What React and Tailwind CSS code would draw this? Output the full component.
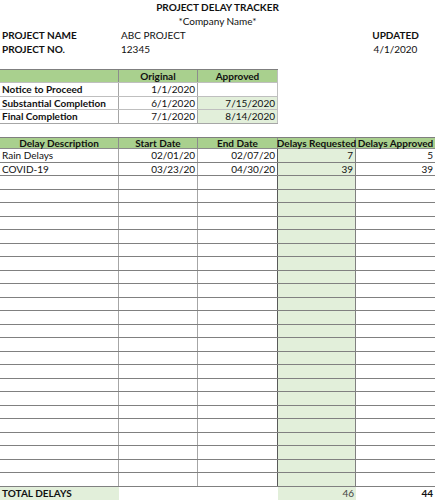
const font = { fontFamily: "Lato, 'Open Sans', sans-serif" };

const delays = [
  { desc: "Rain Delays", start: "02/01/20", end: "02/07/20", req: 7, appr: 5 },
  { desc: "COVID-19", start: "03/23/20", end: "04/30/20", req: 39, appr: 39 },
];

const milestones = [
  { name: "Notice to Proceed", original: "1/1/2020", approved: "" },
  { name: "Substantial Completion", original: "6/1/2020", approved: "7/15/2020" },
  { name: "Final Completion", original: "7/1/2020", approved: "8/14/2020" },
];

export default function App() {
  const rows = [...delays];
  while (rows.length < 25) rows.push(null);

  return (
    <div className="w-[435px] h-[500px] bg-white text-[10px] leading-none text-[#111] overflow-hidden whitespace-nowrap" style={font}>
      {/* Heading */}
      <div className="h-[14px] flex items-center justify-center font-bold">PROJECT DELAY TRACKER</div>
      <div className="h-[14px] flex items-center justify-center">*Company Name*</div>
      <div className="h-[14px] flex items-center">
        <div className="w-[119px] pl-[2px] font-bold">PROJECT NAME</div>
        <div className="flex-1 pl-[2px]">ABC PROJECT</div>
        <div className="w-[79px] text-center font-bold">UPDATED</div>
      </div>
      <div className="h-[14px] flex items-center">
        <div className="w-[119px] pl-[2px] font-bold">PROJECT NO.</div>
        <div className="flex-1 pl-[2px]">12345</div>
        <div className="w-[79px] text-center">4/1/2020</div>
      </div>
      <div className="h-[13px]" />

      {/* Milestones */}
      <div className="w-[278px]">
        <div className="flex h-[13px] bg-[#a9d08e] border-t border-[#7f7f7f] font-bold">
          <div className="w-[119px] border-r border-[#8c8c8c]" />
          <div className="w-[79px] border-r border-[#8c8c8c] flex items-center justify-center">Original</div>
          <div className="w-[80px] border-r border-[#bfbfbf] flex items-center justify-center">Approved</div>
        </div>
        {milestones.map((m) => (
          <div key={m.name} className="flex h-[13.5px] border-t border-[#bfbfbf]">
            <div className="w-[119px] border-r border-[#a6a6a6] pl-[2px] flex items-center font-bold">{m.name}</div>
            <div className="w-[79px] border-r border-[#a6a6a6] pr-[2px] flex items-center justify-end">{m.original}</div>
            <div className={`w-[80px] border-r border-[#bfbfbf] pr-[2px] flex items-center justify-end ${m.approved ? "bg-[#e2efda]" : ""}`}>
              {m.approved}
            </div>
          </div>
        ))}
        <div className="border-t border-[#a6a6a6]" />
      </div>

      <div className="h-[13.5px]" />

      {/* Delay log */}
      <div className="w-[435px]">
        <div className="flex h-[12px] bg-[#a9d08e] border-t border-[#7f7f7f] border-b border-b-[#8c8c8c] font-bold">
          <div className="w-[119px] border-r border-[#8c8c8c] flex items-center justify-center">Delay Description</div>
          <div className="w-[79px] border-r border-[#8c8c8c] flex items-center justify-center">Start Date</div>
          <div className="w-[80px] border-r border-[#8c8c8c] flex items-center justify-center">End Date</div>
          <div className="w-[78px] border-r border-[#8c8c8c] flex items-center justify-center">Delays Requested</div>
          <div className="flex-1 flex items-center justify-center">Delays Approved</div>
        </div>
        {rows.map((r, i) => (
          <div key={i} className="flex h-[13.5px] border-b border-[#808080]">
            <div className="w-[119px] border-r border-[#a6a6a6] pl-[2px] flex items-center">{r?.desc}</div>
            <div className="w-[79px] border-r border-[#a6a6a6] pr-[2px] flex items-center justify-end">{r?.start}</div>
            <div className="w-[80px] border-r border-[#595959] pr-[2px] flex items-center justify-end">{r?.end}</div>
            <div className="w-[78px] border-r border-[#808080] bg-[#e2efda] pr-[2px] flex items-center justify-end">{r?.req}</div>
            <div className="flex-1 pr-[2px] flex items-center justify-end">{r?.appr}</div>
          </div>
        ))}
        <div className="flex h-[13px] font-bold">
          <div className="w-[119px] bg-[#e2efda] pl-[2px] flex items-center">TOTAL DELAYS</div>
          <div className="w-[79px]" />
          <div className="w-[80px]" />
          <div className="w-[78px] bg-[#e2efda] pr-[2px] flex items-center justify-end font-normal text-[#444]">46</div>
          <div className="flex-1 pr-[2px] flex items-center justify-end">44</div>
        </div>
      </div>
    </div>
  );
}
